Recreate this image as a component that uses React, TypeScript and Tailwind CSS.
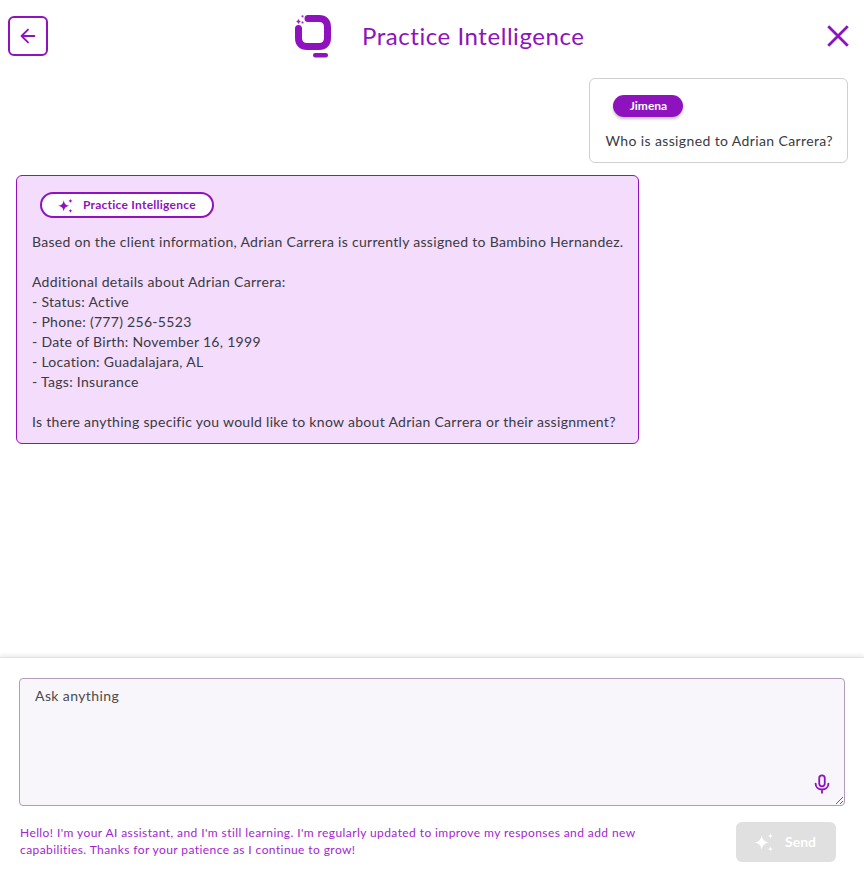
import React from 'react';

const SparkleIcon = ({ className }: { className?: string }) => (
  <svg viewBox="0 0 24 24" fill="currentColor" className={className}>
    <path d="M9.500 4.500c.9 5 2.800 7 8 8-5.200 1-7.100 3-8 8-.9-5-2.800-7-8-8 5.200-1 7.100-3 8-8z" />
    <path d="M19 2.500c.4 2 1 2.600 3 3-2 .4-2.600 1-3 3-.4-2-1-2.600-3-3 2-.4 2.600-1 3-3z" />
    <path d="M19 16.500c.4 2 1 2.600 3 3-2 .4-2.600 1-3 3-.4-2-1-2.600-3-3 2-.4 2.600-1 3-3z" />
  </svg>
);

const Logo = () => (
  <svg viewBox="0 0 36 43" className="w-9 h-[43px] shrink-0">
    <path d="M3.500 13.500V23c0 5.500 3 8.500 8.500 8.500h12c5.500 0 8.500-3 8.500-8.500V12c0-5.500-3-8.500-8.500-8.500H13" fill="none" stroke="#8e12bd" strokeWidth="7" strokeLinecap="round" />
    <rect x="18" y="38" width="15" height="4.500" rx="2.250" fill="#8e12bd" />
    <path d="M3.500 3.500c.4 2 1 2.600 3 3-2 .4-2.600 1-3 3-.4-2-1-2.600-3-3 2-.4 2.600-1 3-3z" fill="#a01fd0" />
    <circle cx="7.500" cy="1.300" r="1.100" fill="#a01fd0" />
    <circle cx="7.500" cy="7.500" r="1.100" fill="#a01fd0" />
  </svg>
);

const ANSWER = `Based on the client information, Adrian Carrera is currently assigned to Bambino Hernandez.

Additional details about Adrian Carrera:
- Status: Active
- Phone: (777) 256-5523
- Date of Birth: November 16, 1999
- Location: Guadalajara, AL
- Tags: Insurance

Is there anything specific you would like to know about Adrian Carrera or their assignment?`;

export default function App() {
  return (
    <div className="h-[888px] w-[864px] flex flex-col bg-white text-[#3a3a3f] font-['Lato','Noto_Sans',sans-serif]">
      {/* header */}
      <div className="h-[72px] shrink-0 flex items-center pl-2 pr-[13px]">
        <button className="w-10 h-10 border-2 border-[#8e12bd] rounded-md flex items-center justify-center text-[#8e12bd]">
          <svg viewBox="0 0 24 24" className="w-[22px] h-[22px]" fill="none" stroke="currentColor" strokeWidth="2" strokeLinecap="round" strokeLinejoin="round">
            <path d="M19 12H5.500M12 5l-7 7 7 7" />
          </svg>
        </button>
        <div className="flex-1 flex items-center ml-[247px]">
          <Logo />
          <span className="ml-[31px] -mt-px text-2xl text-[#8e12bd] tracking-[0.55px]">Practice Intelligence</span>
        </div>
        <svg viewBox="0 0 24 24" className="w-[26px] h-[26px] text-[#8e12bd]" fill="none" stroke="currentColor" strokeWidth="2.600">
          <path d="M3 3l18 18M21 3L3 21" />
        </svg>
      </div>

      {/* messages */}
      <div className="flex-1 flex flex-col px-4 pt-1.5">
        <div className="self-end border border-[#cfcfcf] rounded-md pl-[15px] pr-[14px] pt-4 pb-[11px] bg-white">
          <div className="ml-2 w-[70px] h-[22px] rounded-full bg-[#8e12bd] shadow-[0_2px_3px_rgba(0,0,0,0.25)] flex items-center justify-center text-white text-xs font-bold">
            Jimena
          </div>
          <p className="mt-[14px] text-sm leading-5 tracking-[0.38px]">Who is assigned to Adrian Carrera?</p>
        </div>

        <div className="mt-3 w-[623px] border border-[#8e12bd] rounded-md bg-[#f4dcfd] pl-[15px] pt-4 pb-[11px]">
          <div className="ml-2 w-[174px] h-[26px] rounded-full border-2 border-[#8e12bd] bg-white flex items-center pl-[15px] text-[#8e12bd]">
            <SparkleIcon className="w-[17px] h-[17px]" />
            <span className="ml-[9px] text-xs font-bold tracking-[0.25px]">Practice Intelligence</span>
          </div>
          <p className="mt-[14px] text-sm leading-5 tracking-[0.3px] whitespace-pre-line">{ANSWER}</p>
        </div>
      </div>

      {/* composer */}
      <div className="h-[231px] shrink-0 border-t border-[#e2e2e2] shadow-[0_-2px_4px_rgba(0,0,0,0.08)] px-[19px] pt-5">
        <div className="relative h-[128px]">
          <textarea
            placeholder="Ask anything"
            className="block w-[826px] h-[128px] bg-[#f8f6fa] border border-[#b19cbc] rounded-[4px] px-[15px] pt-[7px] pb-1.5 text-sm leading-5 tracking-[0.4px] outline-none placeholder:text-[#4a4a4f]"
          />
          <svg viewBox="0 0 24 24" className="absolute right-[12px] bottom-[11px] w-[22px] h-[22px] text-[#8e12bd]" fill="none" stroke="currentColor" strokeWidth="2" strokeLinecap="round">
            <rect x="9" y="2.500" width="6" height="12" rx="3" />
            <path d="M5 11.500c0 4 3 6.500 7 6.500s7-2.500 7-6.500M12 18v3.500" />
          </svg>
        </div>
        <div className="flex items-start justify-between mt-4 pr-[9px]">
          <p className="w-[630px] ml-px mt-[2px] text-xs leading-[17px] tracking-[0.41px] text-[#a126cf]">
            Hello! I'm your AI assistant, and I'm still learning. I'm regularly updated to improve my responses and add new capabilities. Thanks for your patience as I continue to grow!
          </p>
          <button className="w-[100px] h-10 rounded-md bg-[#e0e0e0] text-white flex items-center justify-start pl-[17px] text-sm font-bold">
            <SparkleIcon className="w-[22px] h-[22px]" />
            <span className="ml-[10px]">Send</span>
          </button>
        </div>
      </div>
    </div>
  );
}
